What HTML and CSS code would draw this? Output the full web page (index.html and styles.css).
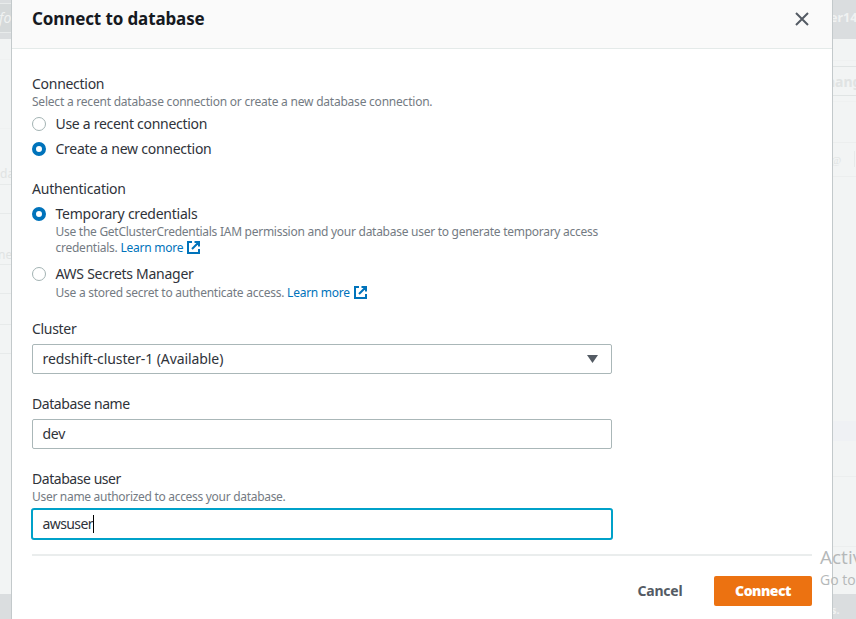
FILE: index.html
```html
<!DOCTYPE html>
<html lang="en">
<head>
<meta charset="utf-8">
<title>Connect to database</title>
<link rel="stylesheet" href="styles.css">
</head>
<body>
<div class="screen">
  <div class="edge edge-left">
    <div class="bar bar-top"><span class="search">fo</span></div>
    <div class="row r-gap1"></div>
    <div class="row r-gap2"></div>
    <div class="row r-data"><span>da</span></div>
    <div class="row r-29"></div>
    <div class="row r-51"><span>ner</span></div>
    <div class="row r-29"></div>
    <div class="row r-31"></div>
    <div class="row r-29"></div>
    <div class="rest"></div>
    <div class="bar bar-bottom"></div>
  </div>
  <main class="modal">
    <header class="modal-head">
      <h1>Connect to database</h1>
      <svg class="close" viewBox="0 0 16 16"><path d="M2 2l12 12M14 2L2 14"/></svg>
    </header>
    <form class="modal-body">
      <section class="group connection">
        <div class="label l-connection">Connection</div>
        <div class="hint h-connection">Select a recent database connection or create a new database connection.</div>
        <div class="option"><i class="radio"></i><span class="o-recent">Use a recent connection</span></div>
        <div class="option"><i class="radio on"></i><span class="o-create">Create a new connection</span></div>
      </section>
      <section class="group auth">
        <div class="label l-auth">Authentication</div>
        <div class="option"><i class="radio on"></i><span class="o-temp">Temporary credentials</span></div>
        <div class="hint indent"><span class="h-temp">Use the GetClusterCredentials IAM permission and your database user to generate temporary access</span><br><span class="h-cred">credentials. <a>Learn more</a></span><svg class="ext" viewBox="0 0 13 13"><path d="M5 1H1v11h11V8M7.5 1H12v4.500M12 1L5 8"/></svg></div>
        <div class="option secrets"><i class="radio"></i><span class="o-aws">AWS Secrets Manager</span></div>
        <div class="hint indent stored"><span class="h-stored">Use a stored secret to authenticate access. <a>Learn more</a></span><svg class="ext" viewBox="0 0 13 13"><path d="M5 1H1v11h11V8M7.500 1H12v4.500M12 1L5 8"/></svg></div>
      </section>
      <section class="group">
        <div class="label field-label l-cluster">Cluster</div>
        <div class="control"><span class="v-cluster">redshift-cluster-1 (Available)</span><svg class="caret" viewBox="0 0 11 8"><path d="M0 0h11L5.500 8z"/></svg></div>
      </section>
      <section class="group">
        <div class="label field-label l-name">Database name</div>
        <div class="control"><span class="v-dev">dev</span></div>
      </section>
      <section class="group user">
        <div class="label l-user">Database user</div>
        <div class="hint h-user">User name authorized to access your database.</div>
        <div class="control focused"><span class="v-user">awsuser</span><i class="cursor"></i></div>
      </section>
    </form>
    <footer class="modal-foot">
      <span class="cancel">Cancel</span>
      <span class="connect"><b>Connect</b></span>
    </footer>
  </main>
  <div class="edge edge-right">
    <div class="bar bar-top"><b>er1460</b></div>
    <div class="row r-21"></div>
    <div class="chip"><b>hange</b></div>
    <div class="row r-5"></div>
    <div class="row r-41"></div>
    <div class="row r-mail"><span>@</span><i></i></div>
    <div class="rest"></div>
    <div class="band"></div>
    <div class="row r-36"></div>
    <div class="row r-70"></div>
    <div class="tail"></div>
    <div class="bar bar-bottom"><b>s.</b></div>
  </div>
  <div class="watermark"><div class="wm-title">Activate Windows</div><div class="wm-sub">Go to Settings</div></div>
</div>
</body>
</html>
```

FILE: styles.css
```css
* { box-sizing: border-box; }
body { margin: 0; font-family: "Noto Sans", "Open Sans", sans-serif; color: #16191f; }
.screen { position: relative; display: grid; grid-template-columns: 12px 820px 24px; width: 856px; height: 619px; overflow: hidden; background: #f2f4f4; }

.edge { display: flex; flex-direction: column; min-width: 0; overflow: hidden; height: 619px; white-space: nowrap; color: #e0e3e3; font-size: 12px; line-height: 16px; }
.edge > div { flex-shrink: 0; overflow: hidden; }
.edge-left { border-right: 1px solid #c3c9cb; }
.edge-right { border-left: 1px solid #c3c9cb; }
.edge .rest { flex: 1; }
.bar { background: #dadddf; color: #f0f2f2; }
.bar-top { height: 39px; font-size: 13px; }
.edge-left .bar-top { padding-top: 3px; }
.search { display: block; height: 30px; border: solid #e8ebeb; border-width: 1px 0; background: #d5d9da; font-style: italic; line-height: 27px; font-size: 14px; text-indent: -1px; }
.bar-bottom { height: 25px; }
.edge-right .bar-top { line-height: 35px; font-size: 12.500px; text-indent: -3px; }
.edge-right .bar-bottom { line-height: 31px; font-size: 11px; text-indent: -2px; }
.row { border-bottom: 1px solid #e7eaea; }
.r-gap1 { height: 21px; border-color: #eff1f1; }
.r-gap2 { height: 69px; border-color: #eff1f1; }
.r-data { height: 56px; padding-top: 37px; }
.r-29 { height: 29px; }
.r-31 { height: 31px; }
.r-51 { height: 51px; padding-top: 33px; text-indent: -2px; }
.r-21 { height: 22px; border-color: #eff1f1; }
.chip { height: 30px; margin-top: 5px; border: solid #e0e4e4; border-width: 1px 0; line-height: 29px; font-size: 14px; text-indent: -7px; }
.r-5 { height: 6px; border-color: #eff1f1; }
.r-41 { height: 41px; border-color: #eceeee; }
.r-mail { display: flex; justify-content: space-between; height: 34px; padding: 8px 1px 0 0; border-color: #eceeee; font: italic 11px/18px "Liberation Serif", serif; text-indent: -2px; }
.r-mail i { width: 1px; height: 16px; background: #e7eaea; }
.band { height: 20px; background: #eff1f4; }
.r-36 { height: 36px; border-color: #eceeee; }
.r-70 { height: 70px; border-color: #eceeee; }
.tail { height: 47px; }

.modal { background: #fff; height: 619px; }
.modal-head { display: flex; justify-content: space-between; height: 49px; padding: 6px 22px 0 20px; background: #fafafa; border-bottom: 1px solid #e4eae9; }
h1 { margin: 0; font-size: 17px; line-height: 26px; font-weight: 700; white-space: nowrap; letter-spacing: -.12px; }
.close { width: 16px; height: 16px; margin-top: 5px; fill: none; stroke: #545b64; stroke-width: 2; }
.modal-body { padding: 25px 20px 0; height: 505px; }
.group { height: 75px; }
.connection { height: 105px; }
.auth { height: 140px; }
.label { font-size: 14px; line-height: 20px; color: #2f333a; white-space: nowrap; }
.field-label { margin-bottom: 5px; }
.hint { font-size: 12px; line-height: 16px; color: #747b83; white-space: nowrap; }
.h-connection { margin-bottom: 4px; }
.option { display: flex; align-items: center; gap: 9.500px; height: 20px; margin-bottom: 5px; font-size: 14px; line-height: 20px; color: #2f333a; white-space: nowrap; }
.auth .option { margin: 5px 0 0; }
.radio { width: 14px; height: 14px; border: 1px solid #a3b3b3; border-radius: 50%; background: #fff; }
.radio.on { border: 4px solid #0073bb; }
.indent { padding-left: 23.500px; }
.auth .secrets { margin-top: 8px; }
.stored { padding-top: 1px; }
a { color: #0073bb; }
.ext { width: 13px; height: 13px; margin-left: 4px; vertical-align: -2px; fill: none; stroke: #0073bb; stroke-width: 2; }
.control { display: flex; align-items: center; width: 580px; height: 30px; padding: 0 13px 0 9.500px; border: 1px solid #aab7b8; border-radius: 2px; font-size: 14px; line-height: 20px; color: #2f333a; white-space: nowrap; }
.caret { width: 11px; height: 8px; margin-left: auto; fill: #545b64; }
.focused { width: 582px; height: 32px; margin: 3px -1px 0; border: 2px solid #00a1c9; border-radius: 3px; }
.cursor { width: 1px; height: 18px; background: #000; }

.l-connection { letter-spacing: -.28px; }
.h-connection { letter-spacing: -.22px; }
.o-recent { letter-spacing: -.29px; }
.o-create { letter-spacing: -.26px; }
.l-auth { letter-spacing: -.22px; }
.o-temp { letter-spacing: -.24px; }
.h-temp { letter-spacing: -.27px; }
.h-cred { letter-spacing: -.25px; }
.o-aws { letter-spacing: -.27px; }
.h-stored { letter-spacing: -.25px; }
.l-cluster { letter-spacing: -.3px; }
.v-cluster { letter-spacing: -.09px; }
.l-name { letter-spacing: -.42px; }
.v-dev { letter-spacing: -.3px; }
.l-user { letter-spacing: -.45px; }
.h-user { letter-spacing: -.3px; }
.v-user { letter-spacing: -.6px; }

.modal-foot { display: flex; justify-content: flex-end; align-items: center; height: 52px; margin: 0 20px; padding-top: 20px; border-top: 2px solid #eaeded; font-size: 14px; font-weight: 700; }
.cancel { margin-right: 31.500px; margin-top: -1px; color: #545b64; letter-spacing: -.2px; }
.connect { width: 98px; height: 30px; border-radius: 2px; background: #ec7211; color: #fff; line-height: 30px; text-align: center; letter-spacing: -.5px; }
.watermark { position: absolute; left: 820px; top: 544px; color: #b5b8b9; white-space: nowrap; font-family: "Open Sans", sans-serif; font-weight: 400; }
.wm-title { font-size: 19px; line-height: 26px; }
.wm-sub { font-size: 14px; line-height: 20px; }
```
